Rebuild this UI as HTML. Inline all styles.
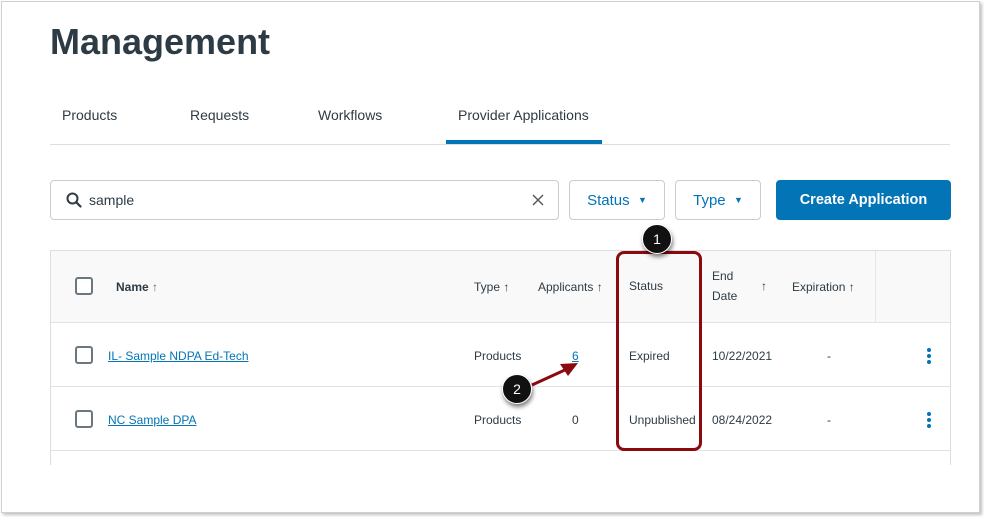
<!DOCTYPE html>
<html><head><meta charset="utf-8"><style>
*{margin:0;padding:0;box-sizing:border-box}
body{width:984px;height:517px;background:#fff;font-family:"Liberation Sans",sans-serif;position:relative;overflow:hidden;color:#2d3b45}
.frame{position:absolute;left:1px;top:1px;width:979px;height:512px;border:1px solid #d0d0d0;box-shadow:2px 2px 3px rgba(0,0,0,.25)}
.a{position:absolute;white-space:nowrap}
h1{position:absolute;left:50px;top:21px;font-size:36px;font-weight:bold;color:#2d3b45;letter-spacing:0px}
.tab{font-size:14px;color:#2d3b45;top:107px}
.btn{border:1px solid #c7cdd1;border-radius:4px;background:#fff;color:#0374b5;font-size:15px;display:flex;align-items:center;justify-content:center}
.th{font-size:12px;color:#2d3b45}
.td{font-size:12px;color:#2d3b45}
.cb{position:absolute;width:18px;height:18px;border:2px solid #6b7780;border-radius:3px;background:#fff}
.link{color:#0374b5;text-decoration:underline}
.hl{position:absolute;left:0;width:100%;height:1px;background:#e0e3e5}
.dot{position:absolute;width:4px;height:4px;border-radius:50%;background:#0374b5}
.call{position:absolute;width:30px;height:30px;border-radius:50%;background:#111;border:1px solid #fff;box-shadow:1px 3px 4px rgba(0,0,0,.5);color:#fff;font-size:14px;display:flex;align-items:center;justify-content:center}
</style></head><body>
<div class="frame"></div>
<h1>Management</h1>
<div class="a tab" style="left:62px">Products</div>
<div class="a tab" style="left:190px">Requests</div>
<div class="a tab" style="left:318px">Workflows</div>
<div class="a tab" style="left:458px">Provider Applications</div>
<div class="a" style="left:50px;top:144px;width:900px;height:1px;background:#dcdfe1"></div>
<div class="a" style="left:446px;top:140px;width:156px;height:4px;background:#0374b5"></div>

<div class="a" style="left:50px;top:180px;width:509px;height:40px;border:1px solid #c7cdd1;border-radius:4px"></div>
<svg class="a" style="left:66px;top:192px" width="16" height="16" viewBox="0 0 16 16"><circle cx="6.5" cy="6.5" r="5" fill="none" stroke="#2d3b45" stroke-width="2"/><path d="M10.2 10.2L14.5 14.5" stroke="#2d3b45" stroke-width="2.2" stroke-linecap="round"/></svg>
<div class="a" style="left:89px;top:192px;font-size:14px;color:#2d3b45">sample</div>
<svg class="a" style="left:532px;top:194px" width="12" height="12" viewBox="0 0 12 12"><path d="M1 1L11 11M11 1L1 11" stroke="#555" stroke-width="1.4"/></svg>

<div class="a btn" style="left:569px;top:180px;width:96px;height:40px">Status&nbsp;&nbsp;<span style="font-size:9px">▼</span></div>
<div class="a btn" style="left:675px;top:180px;width:86px;height:40px">Type&nbsp;&nbsp;<span style="font-size:9px">▼</span></div>
<div class="a btn" style="left:776px;top:180px;width:175px;height:40px;background:#0374b5;border-color:#0374b5;color:#fff;font-weight:bold;font-size:14.5px">Create Application</div>

<div class="a" style="left:50px;top:250px;width:901px;height:215px;border:1px solid #dcdfe1;border-bottom:none;overflow:hidden">
 <div style="position:absolute;left:0;top:0;width:100%;height:71px;background:#f9f9f9"></div>
 <div style="position:absolute;left:824px;top:0;width:1px;height:71px;background:#e6e6e6"></div>
 <div class="hl" style="top:71px"></div>
 <div class="hl" style="top:135px"></div>
 <div class="hl" style="top:199px"></div>
</div>
<div class="cb" style="left:75px;top:277px"></div>
<div class="a th" style="left:116px;top:280px;font-weight:bold">Name <span style="font-weight:normal;color:#666">↑</span></div>
<div class="a th" style="left:474px;top:280px">Type ↑</div>
<div class="a th" style="left:538px;top:280px">Applicants ↑</div>
<div class="a th" style="left:629px;top:279px">Status</div>
<div class="a th" style="left:712px;top:269px">End</div>
<div class="a th" style="left:712px;top:289px">Date</div>
<div class="a th" style="left:761px;top:279px">↑</div>
<div class="a th" style="left:792px;top:280px">Expiration ↑</div>

<div class="cb" style="left:75px;top:346px"></div>
<div class="a td link" style="left:108px;top:349px">IL- Sample NDPA Ed-Tech</div>
<div class="a td" style="left:474px;top:349px">Products</div>
<div class="a td link" style="left:572px;top:349px">6</div>
<div class="a td" style="left:629px;top:349px">Expired</div>
<div class="a td" style="left:712px;top:349px">10/22/2021</div>
<div class="a td" style="left:827px;top:349px">-</div>
<div class="dot" style="left:927px;top:348px"></div><div class="dot" style="left:927px;top:354px"></div><div class="dot" style="left:927px;top:360px"></div>

<div class="cb" style="left:75px;top:410px"></div>
<div class="a td link" style="left:108px;top:413px">NC Sample DPA</div>
<div class="a td" style="left:474px;top:413px">Products</div>
<div class="a td" style="left:572px;top:413px">0</div>
<div class="a td" style="left:629px;top:413px">Unpublished</div>
<div class="a td" style="left:712px;top:413px">08/24/2022</div>
<div class="a td" style="left:827px;top:413px">-</div>
<div class="dot" style="left:927px;top:412px"></div><div class="dot" style="left:927px;top:418px"></div><div class="dot" style="left:927px;top:424px"></div>

<div class="a" style="left:616px;top:251px;width:86px;height:200px;border:3px solid #8b0a0f;border-radius:8px"></div>
<div class="call" style="left:642px;top:224px">1</div>
<svg class="a" style="left:520px;top:355px" width="70" height="40" viewBox="0 0 70 40"><path d="M12 30L47 14" stroke="#8b0a0f" stroke-width="3"/><path d="M58 8L40 9L48 21Z" fill="#8b0a0f"/></svg>
<div class="call" style="left:502px;top:374px">2</div>
</body></html>
